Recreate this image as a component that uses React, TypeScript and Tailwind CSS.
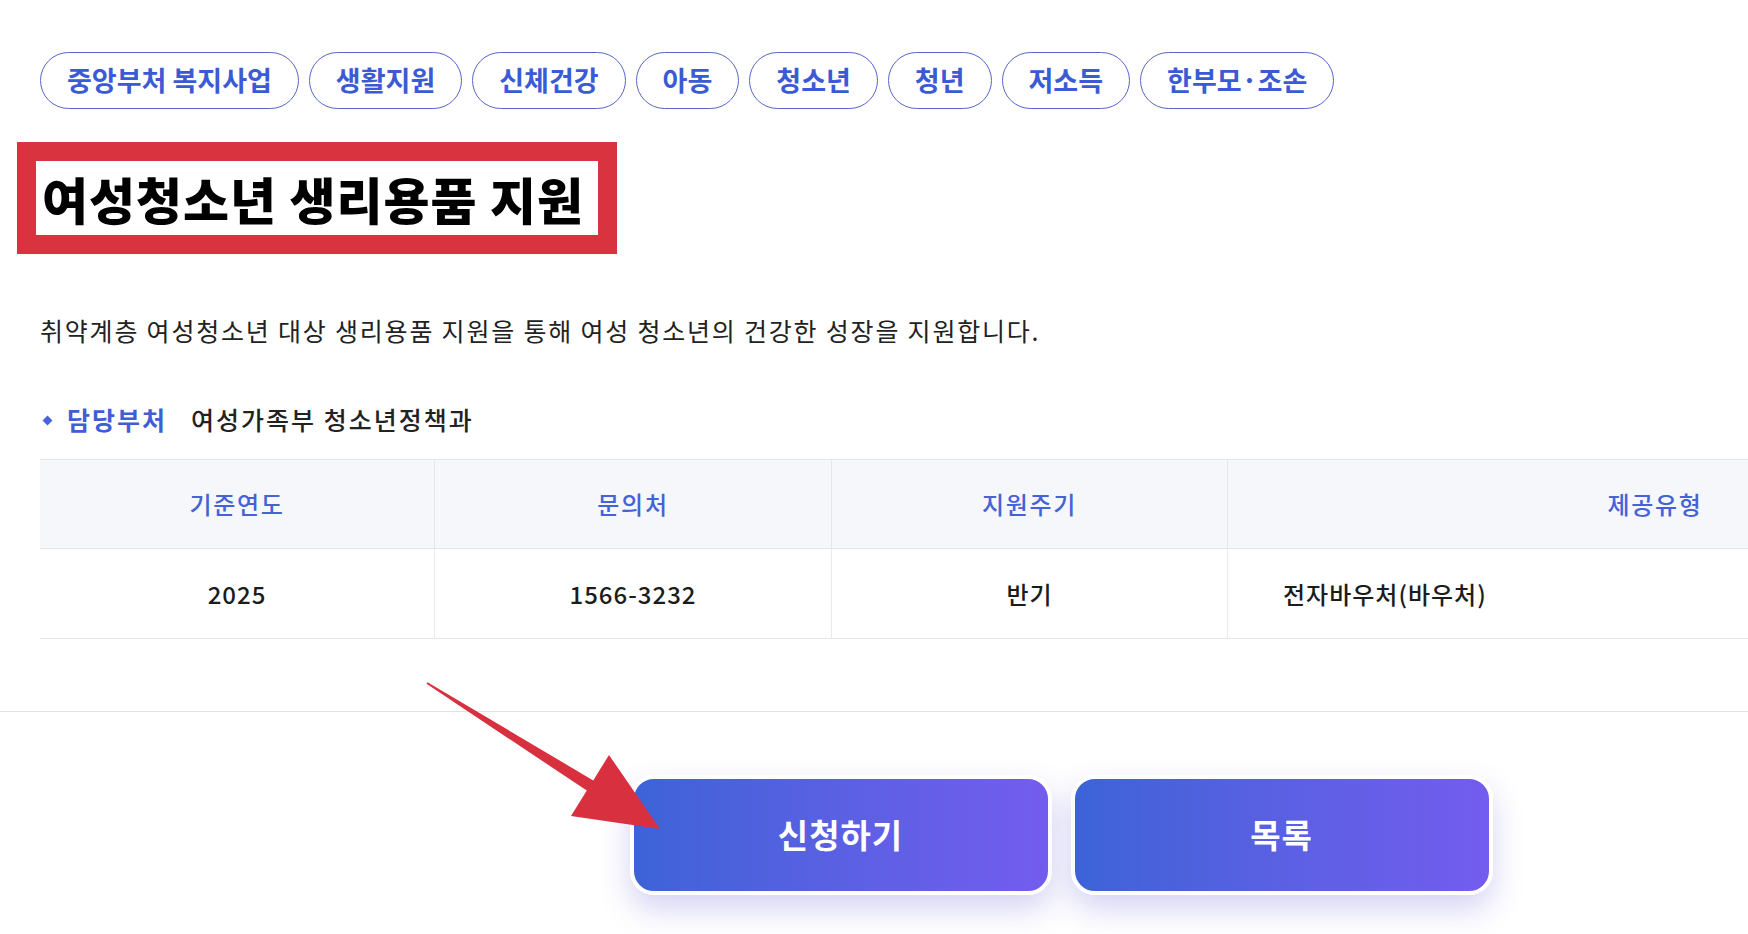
import React from "react";

const tags = [
  "중앙부처 복지사업",
  "생활지원",
  "신체건강",
  "아동",
  "청소년",
  "청년",
  "저소득",
  "한부모·조손",
];

export default function App() {
  return (
    <div className="w-full h-screen overflow-hidden bg-white font-['Noto_Sans_CJK_KR',sans-serif]">
      <div className="relative w-[2122px]">
        <div className="px-[40px] pt-[52px]">
          {/* 분류 태그 */}
          <div className="flex gap-[10px]">
            {tags.map((t) => (
              <span
                key={t}
                className="h-[57px] px-[26px] flex items-center rounded-full border border-[#5767c6] text-[27px] font-semibold text-[#3b5bd5]"
              >
                {t}
              </span>
            ))}
          </div>

          {/* 제목 (강조 박스) */}
          <div className="-ml-[23px] mt-[33px]">
            <h1 className="inline-flex items-center h-[112px] border-[19px] border-[#d8333f] bg-white pl-[6px] pr-[14px] text-[50px] tracking-[1px] leading-none font-black text-black">
              여성청소년 생리용품 지원
            </h1>
          </div>

          <p className="mt-[58px] text-[25px] tracking-[1.8px] leading-[36px] text-[#222]">
            취약계층 여성청소년 대상 생리용품 지원을 통해 여성 청소년의 건강한 성장을 지원합니다.
          </p>

          <div className="mt-[54px] flex items-center h-[36px] text-[25px] tracking-[2px]">
            <span className="ml-[4px] w-[7px] h-[7px] rotate-45 bg-[#4a63d8]" />
            <span className="ml-[16px] font-semibold text-[#3f5dd6]">담당부처</span>
            <span className="ml-[24px] font-medium text-[#222]">여성가족부 청소년정책과</span>
          </div>

          {/* 정보 테이블 */}
          <div className="mt-[21px] text-[24px]">
            <div className="flex h-[90px] bg-[#f5f7fb] border-y border-[#e3e6eb] text-[#4562d6] font-medium tracking-[1.7px]">
              <div className="w-[395px] flex items-center justify-center border-r border-[#e3e6eb]">기준연도</div>
              <div className="w-[397px] flex items-center justify-center border-r border-[#e3e6eb]">문의처</div>
              <div className="w-[396px] flex items-center justify-center border-r border-[#e3e6eb]">지원주기</div>
              <div className="flex-1 flex items-center justify-center">제공유형</div>
            </div>
            <div className="flex h-[90px] border-b border-[#e3e6eb] text-[#1c1c1c] font-medium tracking-[1px]">
              <div className="w-[395px] flex items-center justify-center border-r border-[#e8eaee]">2025</div>
              <div className="w-[397px] flex items-center justify-center border-r border-[#e8eaee]">1566-3232</div>
              <div className="w-[396px] flex items-center justify-center border-r border-[#e8eaee]">반기</div>
              <div className="flex-1 flex items-center pl-[55px]">전자바우처(바우처)</div>
            </div>
          </div>
        </div>

        <div className="mt-[72px] h-px bg-[#e2e2e2]" />

        {/* 버튼 */}
        <div className="mt-[63px] flex justify-center gap-[19px]">
          <button className="w-[422px] h-[120px] rounded-[24px] border-4 border-white bg-linear-to-r from-[#3c63d7] to-[#735cef] shadow-[0_14px_30px_rgba(88,80,210,0.25)] text-white font-bold text-[33px] tracking-[1px]">
            신청하기
          </button>
          <button className="w-[422px] h-[120px] rounded-[24px] border-4 border-white bg-linear-to-r from-[#3c63d7] to-[#735cef] shadow-[0_14px_30px_rgba(88,80,210,0.25)] text-white font-bold text-[33px] tracking-[1px]">
            목록
          </button>
        </div>

        {/* 빨간 화살표 */}
        <svg
          className="absolute top-0 left-0 pointer-events-none"
          width="2122"
          height="934"
          viewBox="0 0 2122 934"
        >
          <polygon
            points="427.5,682.2 593.2,780.4 609,755 660,829 571,816 586.8,790.6 426.5,683.8"
            fill="#d9303f"
          />
        </svg>
      </div>
    </div>
  );
}
